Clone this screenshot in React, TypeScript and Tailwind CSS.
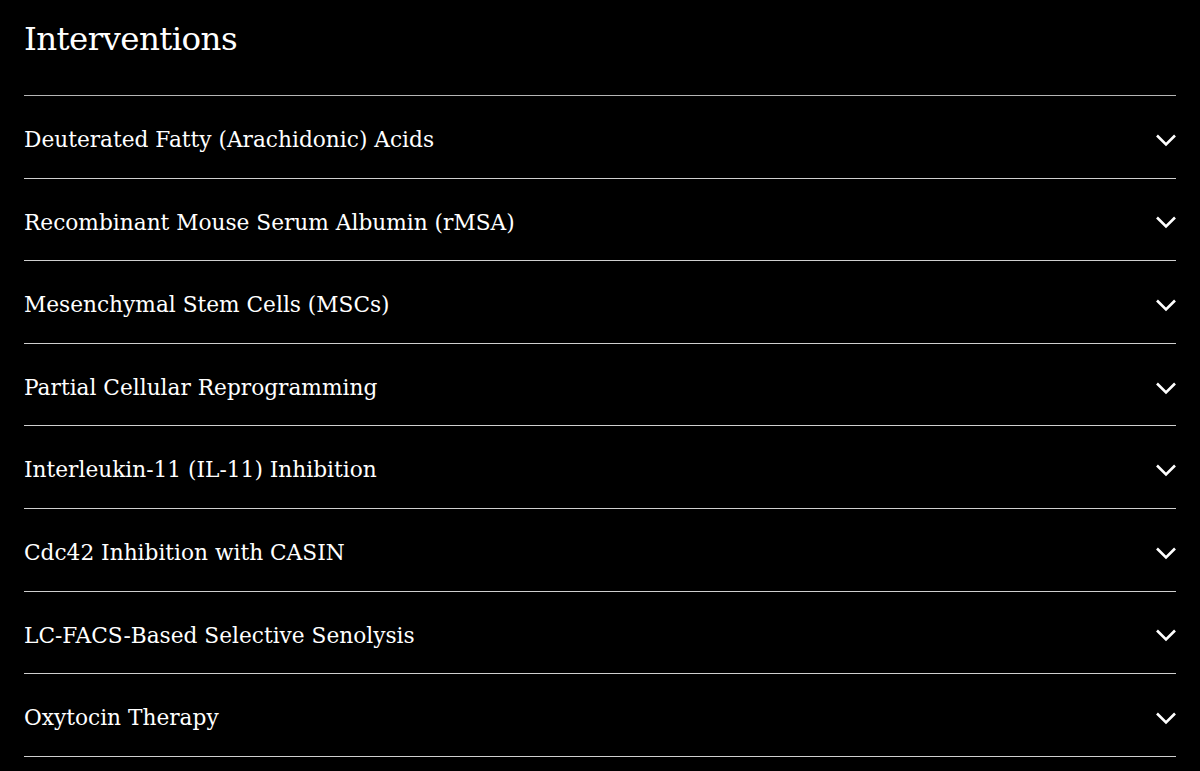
const items = [
  "Deuterated Fatty (Arachidonic) Acids",
  "Recombinant Mouse Serum Albumin (rMSA)",
  "Mesenchymal Stem Cells (MSCs)",
  "Partial Cellular Reprogramming",
  "Interleukin-11 (IL-11) Inhibition",
  "Cdc42 Inhibition with CASIN",
  "LC-FACS-Based Selective Senolysis",
  "Oxytocin Therapy",
];

function Chevron() {
  return (
    <svg width="22" height="14" viewBox="0 0 22 14" fill="none" className="-mr-[1px] shrink-0">
      <path d="M2 2.5 L11 11.5 L20 2.5" stroke="white" strokeWidth="2.6" />
    </svg>
  );
}

export default function App() {
  return (
    <div className="min-h-[771px] bg-black px-6 text-white font-['DejaVu_Serif',serif]">
      {/* Heading */}
      <h1 className="pt-[17px] pb-[34px] text-[32.5px] leading-[44px] tracking-[-0.6px]">
        Interventions
      </h1>

      {/* Accordion rows */}
      <div className="border-t border-[#b5b5b5]">
        {items.map((item) => (
          <button
            key={item}
            className="flex w-full items-center justify-between border-b border-[#cfcfcf] pt-[27px] pb-[21px] text-left"
          >
            <span className="text-[21.7px] leading-[33.6px]">{item}</span>
            <Chevron />
          </button>
        ))}
      </div>
    </div>
  );
}
